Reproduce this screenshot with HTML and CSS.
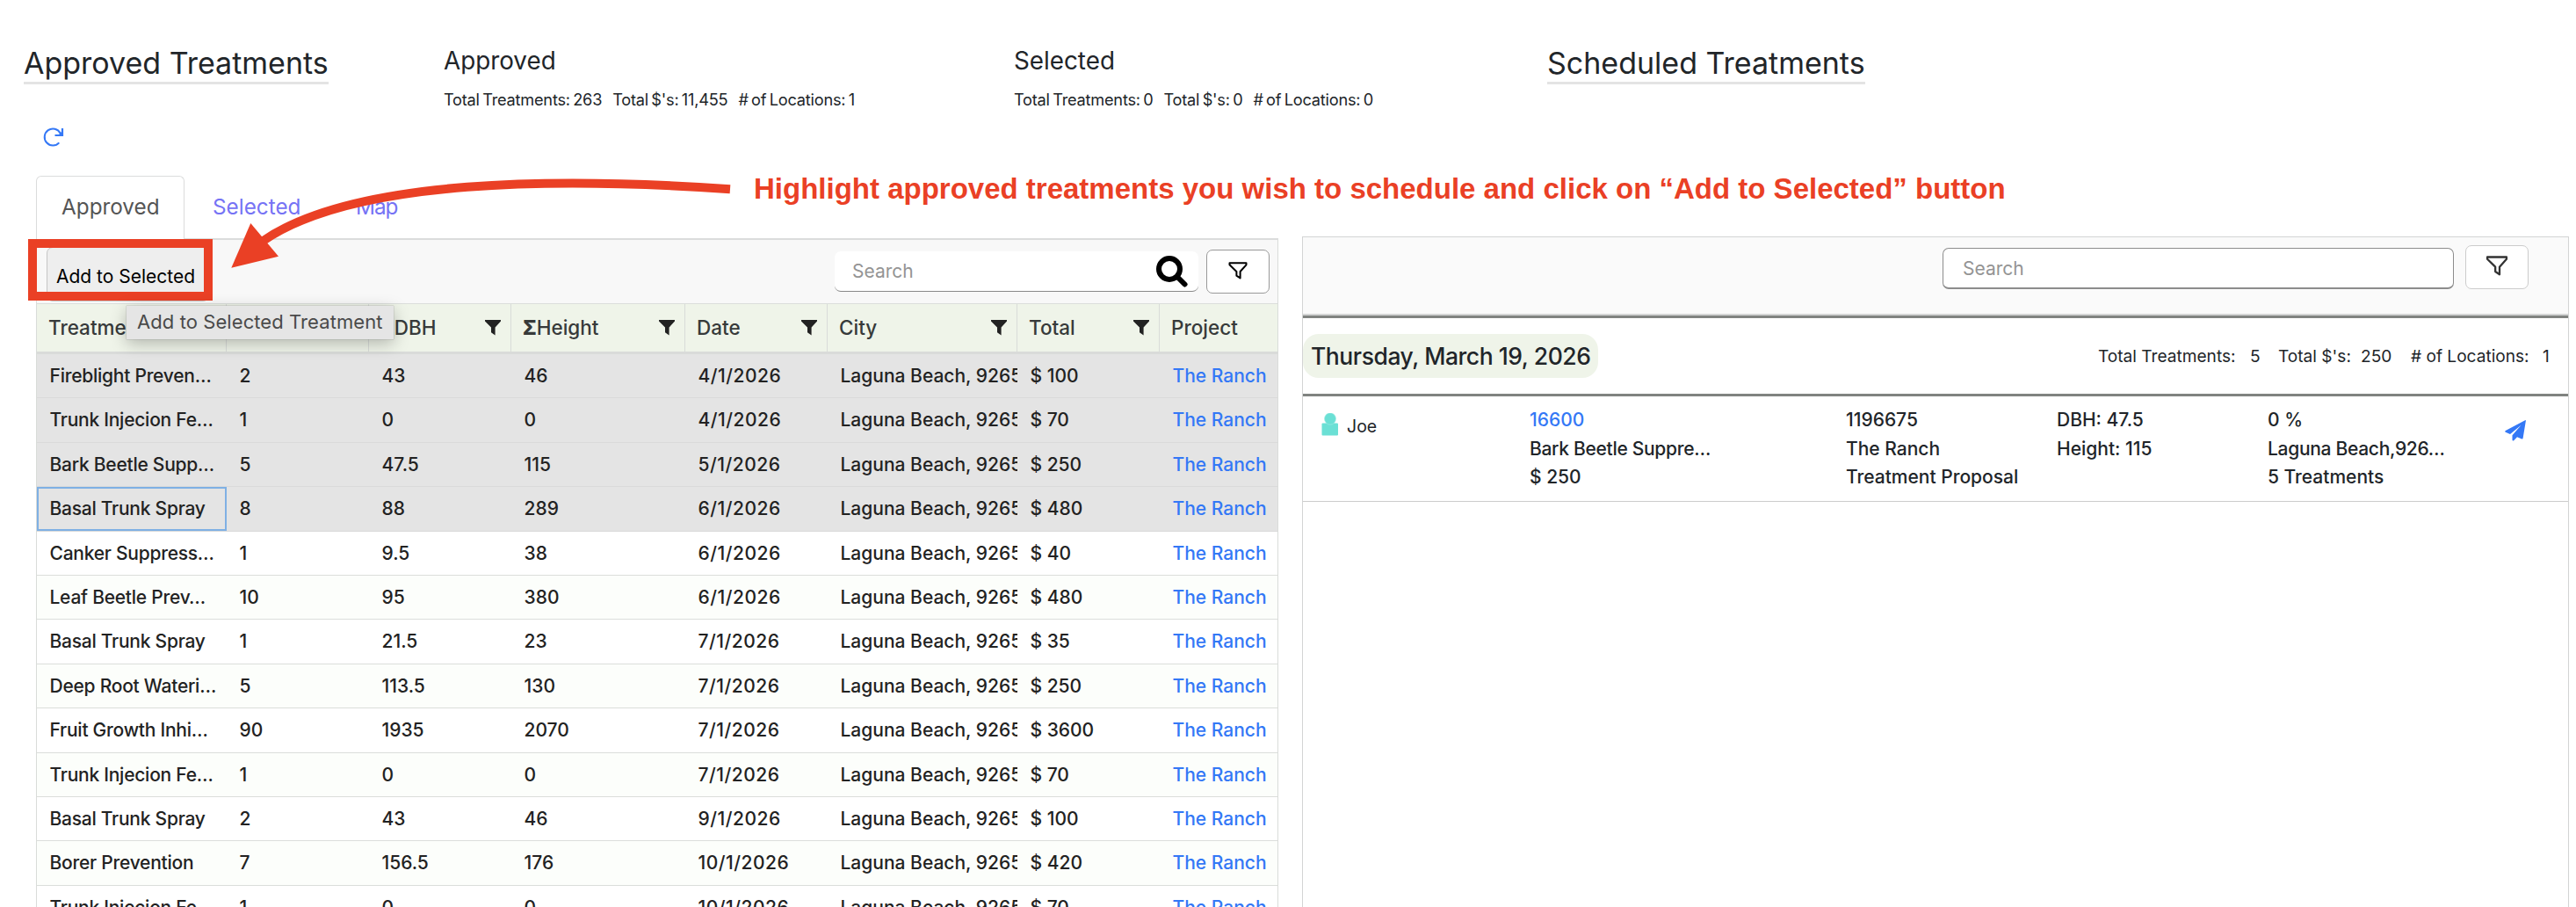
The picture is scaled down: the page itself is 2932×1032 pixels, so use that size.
FILE: index.html
```html
<!DOCTYPE html>
<html lang="en">
<head>
<meta charset="utf-8">
<title>Treatments</title>
<link rel="stylesheet" href="styles.css">
</head>
<body>
<svg class="defs" width="0" height="0" aria-hidden="true">
  <symbol id="funnel" viewBox="0 0 18 18"><path d="M0 0h18v1.600L11.600 8.500V17.600L7 14.200V8.500L0 1.600z" fill="#222"/></symbol>
  <symbol id="funnel-line" viewBox="0 0 22 20"><path d="M1.500 1.300h19v2L13.600 11v7.500l-4.200-2.800V11L1.500 3.300z" fill="none" stroke="currentColor" stroke-width="2" stroke-linejoin="round"/></symbol>
</svg>
<header class="summary">
  <div class="col-title"><h1>Approved Treatments</h1></div>
  <div class="col-approved">
    <h2>Approved</h2>
    <p class="totals"><span>Total Treatments: 263</span><span>Total $'s: 11,455</span><span># of Locations: 1</span></p>
  </div>
  <div class="col-selected">
    <h2>Selected</h2>
    <p class="totals"><span>Total Treatments: 0</span><span>Total $'s: 0</span><span># of Locations: 0</span></p>
  </div>
  <div class="col-scheduled"><h1>Scheduled Treatments</h1></div>
</header>
<div class="refresh">
  <svg width="24" height="24" viewBox="0 0 24 24"><path d="M18.300 18.300A9.500 9.500 0 1 1 19.600 7.500L21.500 9.500" fill="none" stroke="#3478f6" stroke-width="2"/><path d="M22 2v8h-8.500" fill="none" stroke="#3478f6" stroke-width="2.200"/><path d="M22 5v5h-5z" fill="#3478f6"/></svg>
</div>
<main>
  <section class="approved">
    <nav class="tabs"><a class="tab active">Approved</a><a class="tab">Selected</a><a class="tab map">Map</a></nav>
    <div class="panel">
      <div class="toolbar">
        <button class="add">Add to Selected</button>
        <div class="search">Search
          <svg width="38" height="38" viewBox="0 0 38 38"><circle cx="17" cy="17" r="12" fill="none" stroke="#000" stroke-width="6"/><path d="M26 26l8.500 8.500" stroke="#000" stroke-width="6" stroke-linecap="round"/></svg>
        </div>
        <button class="filter"><svg width="22" height="20"><use href="#funnel-line"/></svg></button>
      </div>
      <div class="grid head">
        <div>Treatment<svg><use href="#funnel"/></svg></div>
        <div><svg><use href="#funnel"/></svg></div>
        <div><b>Σ</b>DBH<svg><use href="#funnel"/></svg></div>
        <div><b>Σ</b>Height<svg><use href="#funnel"/></svg></div>
        <div>Date<svg><use href="#funnel"/></svg></div>
        <div>City<svg><use href="#funnel"/></svg></div>
        <div>Total<svg><use href="#funnel"/></svg></div>
        <div>Project</div>
      </div>
      <div class="grid row sel"><div>Fireblight Preven…</div><div>2</div><div>43</div><div>46</div><div class="date">4/1/2026</div><div>Laguna Beach, 92651</div><div>$ 100</div><div><a>The Ranch</a></div></div>
      <div class="grid row sel"><div>Trunk Injecion Fe…</div><div>1</div><div>0</div><div>0</div><div class="date">4/1/2026</div><div>Laguna Beach, 92651</div><div>$ 70</div><div><a>The Ranch</a></div></div>
      <div class="grid row sel"><div>Bark Beetle Supp…</div><div>5</div><div>47.5</div><div>115</div><div class="date">5/1/2026</div><div>Laguna Beach, 92651</div><div>$ 250</div><div><a>The Ranch</a></div></div>
      <div class="grid row sel"><div class="focus">Basal Trunk Spray</div><div>8</div><div>88</div><div>289</div><div class="date">6/1/2026</div><div>Laguna Beach, 92651</div><div>$ 480</div><div><a>The Ranch</a></div></div>
      <div class="grid row"><div>Canker Suppress…</div><div>1</div><div>9.5</div><div>38</div><div class="date">6/1/2026</div><div>Laguna Beach, 92651</div><div>$ 40</div><div><a>The Ranch</a></div></div>
      <div class="grid row alt"><div>Leaf Beetle Prev…</div><div>10</div><div>95</div><div>380</div><div class="date">6/1/2026</div><div>Laguna Beach, 92651</div><div>$ 480</div><div><a>The Ranch</a></div></div>
      <div class="grid row"><div>Basal Trunk Spray</div><div>1</div><div>21.5</div><div>23</div><div class="date">7/1/2026</div><div>Laguna Beach, 92651</div><div>$ 35</div><div><a>The Ranch</a></div></div>
      <div class="grid row alt"><div>Deep Root Wateri…</div><div>5</div><div>113.5</div><div>130</div><div class="date">7/1/2026</div><div>Laguna Beach, 92651</div><div>$ 250</div><div><a>The Ranch</a></div></div>
      <div class="grid row"><div>Fruit Growth Inhi…</div><div>90</div><div>1935</div><div>2070</div><div class="date">7/1/2026</div><div>Laguna Beach, 92651</div><div>$ 3600</div><div><a>The Ranch</a></div></div>
      <div class="grid row alt"><div>Trunk Injecion Fe…</div><div>1</div><div>0</div><div>0</div><div class="date">7/1/2026</div><div>Laguna Beach, 92651</div><div>$ 70</div><div><a>The Ranch</a></div></div>
      <div class="grid row"><div>Basal Trunk Spray</div><div>2</div><div>43</div><div>46</div><div class="date">9/1/2026</div><div>Laguna Beach, 92651</div><div>$ 100</div><div><a>The Ranch</a></div></div>
      <div class="grid row alt"><div>Borer Prevention</div><div>7</div><div>156.5</div><div>176</div><div class="date">10/1/2026</div><div>Laguna Beach, 92651</div><div>$ 420</div><div><a>The Ranch</a></div></div>
      <div class="grid row"><div>Trunk Injecion Fe…</div><div>1</div><div>0</div><div>0</div><div class="date">10/1/2026</div><div>Laguna Beach, 92651</div><div>$ 70</div><div><a>The Ranch</a></div></div>
    </div>
  </section>
  <section class="scheduled">
    <div class="sbar">
      <div class="ssearch">Search</div>
      <button class="sfilter"><svg width="26" height="23"><use href="#funnel-line"/></svg></button>
    </div>
    <div class="day">
      <h3>Thursday, March 19, 2026</h3>
      <div class="day-totals"><span>Total Treatments:</span><span>5</span><span>Total $'s:</span><span>250</span><span># of Locations:</span><span>1</span></div>
    </div>
    <div class="job">
      <div class="who"><svg width="20" height="26" viewBox="0 0 20 26"><rect x=".5" y="11.500" width="18.500" height="14" rx="1" fill="#6be0d5"/><ellipse cx="10" cy="6.500" rx="6.500" ry="6.700" fill="#6be0d5" stroke="#a5ece5" stroke-width=".6"/></svg><span>Joe</span></div>
      <div><p><a>16600</a></p><p class="clip">Bark Beetle Suppre…</p><p>$ 250</p></div>
      <div><p>1196675</p><p>The Ranch</p><p>Treatment Proposal</p></div>
      <div><p>DBH: 47.5</p><p>Height: 115</p></div>
      <div><p>0 %</p><p class="clip">Laguna Beach,926…</p><p>5 Treatments</p></div>
      <div class="send"><svg width="24" height="24" viewBox="0 0 24 24"><path d="M23 .2c.5-.3 1 0 .9.600L20.600 20.700c-.1.700-.7 1-1.300.700L14 19.200l-3.800 4c-.7.700-1.700.400-1.700-.600v-5.400L18.500 5.800 6 16 .9 13.800c-.8-.4-.8-1.300-.1-1.700z" fill="#3478f6"/></svg></div>
    </div>
  </section>
</main>
<div class="highlight"></div>
<svg class="arrow" width="600" height="120" viewBox="250 195 600 120"><path d="M831 215.300C640 202 402 202 298 275" fill="none" stroke="#ea4025" stroke-width="10"/><path d="M263.300 304.700L285.300 254L317 291.700z" fill="#ea4025"/></svg>
<div class="note">Highlight approved treatments you wish to schedule and click on “Add to Selected” button</div>
<div class="tooltip">Add to Selected Treatment</div>
</body>
</html>
```
FILE: styles.css
```css
* { box-sizing: border-box; }
body {
  margin: 0;
  width: 2932px;
  height: 1032px;
  overflow: hidden;
  position: relative;
  background: #fff;
  color: #212529;
  font-family: Inter, "Liberation Sans", sans-serif;
  font-size: 21px;
  font-weight: 400;
}
h1, h2, h3, p { margin: 0; font-weight: inherit; }
button { font: inherit; margin: 0; padding: 0; }
a { color: #3478f6; }
.defs { position: absolute; }

.summary {
  display: grid;
  grid-template-columns: 478px 649px 607px 1fr;
  height: 140px;
  padding: 52px 0 0 27px;
}
h1 {
  display: inline-block;
  font-size: 34px;
  line-height: 40px;
  padding-bottom: 1px;
  border-bottom: 3px solid #e4e4e4;
}
h2 { font-size: 27.8px; line-height: 34px; }
.totals {
  display: flex;
  gap: 12px;
  margin-top: 16px;
  font-size: 18.2px;
  line-height: 22px;
  letter-spacing: -.22px;
  word-spacing: -1.5px;
  white-space: nowrap;
}
.refresh { height: 60px; padding: 4px 0 0 49px; }

main { display: flex; height: 832px; padding-left: 41px; }
.approved { width: 1414px; }
.tabs { display: flex; height: 73px; border-bottom: 2px solid #dbdcdc; }
.tab {
  width: 163px;
  padding-left: 32px;
  color: #7673f5;
  font-size: 24.3px;
  line-height: 71px;
}
.tab.active {
  width: 169px;
  height: 73px;
  padding-left: 28px;
  border: 1px solid #dbdcdc;
  border-bottom: 0;
  border-radius: 6px 6px 0 0;
  background: #fff;
  color: #555;
  line-height: 69px;
}
.tab.map { letter-spacing: -1px; }
.panel { border: 1px solid #d9dcd9; border-width: 0 1px; }
.toolbar {
  display: flex;
  height: 73px;
  padding: 8px 10px 0 11px;
  background: #f8f8f8;
  border-bottom: 1px solid #dbdedb;
}
.add {
  width: 185px;
  height: 62px;
  padding: 5px 0 0 10px;
  text-align: left;
  background: #eee;
  border: 1px solid #c6c6c6;
  border-radius: 7px;
  color: #000;
}
.search {
  display: flex;
  justify-content: space-between;
  width: 414px;
  height: 46px;
  margin: 5px 9px 0 auto;
  padding: 0 12px 0 20px;
  background: #fff;
  border-bottom: 1px solid #888;
  border-radius: 7px;
  color: #949494;
  line-height: 45px;
}
.search svg { margin-top: 3px; }
.filter {
  display: grid;
  place-items: center;
  width: 72px;
  height: 50px;
  margin-top: 3px;
  margin-right: -1px;
  padding-bottom: 3px;
  background: #fff;
  border: 1px solid #999;
  border-radius: 7px;
  color: #000;
}
.grid { display: grid; grid-template-columns: 216px 162px 162px 198px 162px 216px 162px 134px; }
.grid > div { overflow: hidden; white-space: nowrap; }
.head { height: 57px; background: #eff4e9; border-bottom: 3px solid #d9dbd9; }
.head > div {
  display: flex;
  align-items: center;
  padding: 0 11px 0 13px;
  border-right: 1px solid #d9dcd9;
  color: #373a3a;
  font-size: 22.5px;
  font-weight: 500;
  line-height: 54px;
}
.head > div:last-child { border-right: 0; }
.head b { font-weight: 800; }
.head svg { width: 18px; height: 18px; margin: 0 0 0 auto; }
.row {
  height: 50.4px;
  border-bottom: 1px solid #dbdedb;
  color: #222;
  font-weight: 450;
  line-height: 50.8px;
}
.row > div { padding-left: 14.5px; }
.row > div:first-child { letter-spacing: -.25px; }
.row .date { letter-spacing: .5px; }
.row.alt { background: #fcfefb; }
.row.sel { background: #e4e4e4; border-color: #dadada; }
.row > .focus { padding-left: 12.5px; border: 2px solid #7fb0e4; line-height: 46.8px; }

.scheduled {
  width: 1442px;
  height: 800px;
  margin: 69px 0 0 27px;
  border: 1px solid #d3d4d4;
}
.sbar {
  display: flex;
  justify-content: flex-end;
  height: 89px;
  padding: 9px 45px 0 0;
  background: #fafafa;
  border-bottom: 2px solid #d3d4d4;
}
.ssearch {
  width: 582px;
  height: 47px;
  margin: 3px 13px 0 0;
  padding-left: 22px;
  background: #fff;
  border: 1px solid #8c8c8c;
  border-bottom-width: 2px;
  border-radius: 7px;
  color: #949494;
  line-height: 45px;
}
.sfilter {
  display: grid;
  place-items: center;
  width: 72px;
  height: 50px;
  padding-bottom: 4px;
  background: #fff;
  border: 1px solid #ccc;
  border-radius: 7px;
  color: #333;
}
.day {
  display: flex;
  align-items: center;
  justify-content: space-between;
  height: 92px;
  border: 3px solid #808380;
  border-width: 3px 0;
}
h3 {
  width: 336px;
  height: 50px;
  padding-left: 9px;
  border-radius: 18px;
  background: #eff4e9;
  font-size: 26.5px;
  font-weight: 500;
  letter-spacing: -.45px;
  line-height: 50px;
  white-space: nowrap;
}
.day-totals {
  display: grid;
  grid-template-columns: 173px 32px 94px 57px 150px 29px;
  font-size: 19.1px;
  line-height: 50px;
  white-space: nowrap;
}
.job {
  display: grid;
  grid-template-columns: 258px 360px 240px 240px 270px 1fr;
  height: 120px;
  padding-top: 11px;
  border-bottom: 1px solid #ccc;
  font-weight: 450;
  line-height: 32.5px;
}
.clip { letter-spacing: -.3px; }
.who { display: flex; padding-left: 21px; font-size: 19.5px; font-weight: 400; }
.who svg { margin-top: 8px; }
.who span { margin: 7px 0 0 9px; }
.send { padding-top: 16px; }

.highlight {
  position: absolute;
  left: 32px;
  top: 272px;
  width: 210px;
  height: 70px;
  border: 10px solid #ea4025;
}
.arrow { position: absolute; left: 250px; top: 195px; }
.note {
  position: absolute;
  left: 858px;
  top: 195px;
  color: #ea4025;
  font: bold 33px/40px "Liberation Sans", Arial, sans-serif;
  white-space: nowrap;
}
.tooltip {
  position: absolute;
  left: 144px;
  top: 348px;
  width: 304px;
  height: 38px;
  padding-left: 12px;
  background: #e5e5e5;
  box-shadow: 0 0 1px #777, 0 5px 18px rgba(0, 0, 0, .25);
  color: #4a4a4a;
  font-size: 22px;
  letter-spacing: .08px;
  line-height: 37px;
}
```
